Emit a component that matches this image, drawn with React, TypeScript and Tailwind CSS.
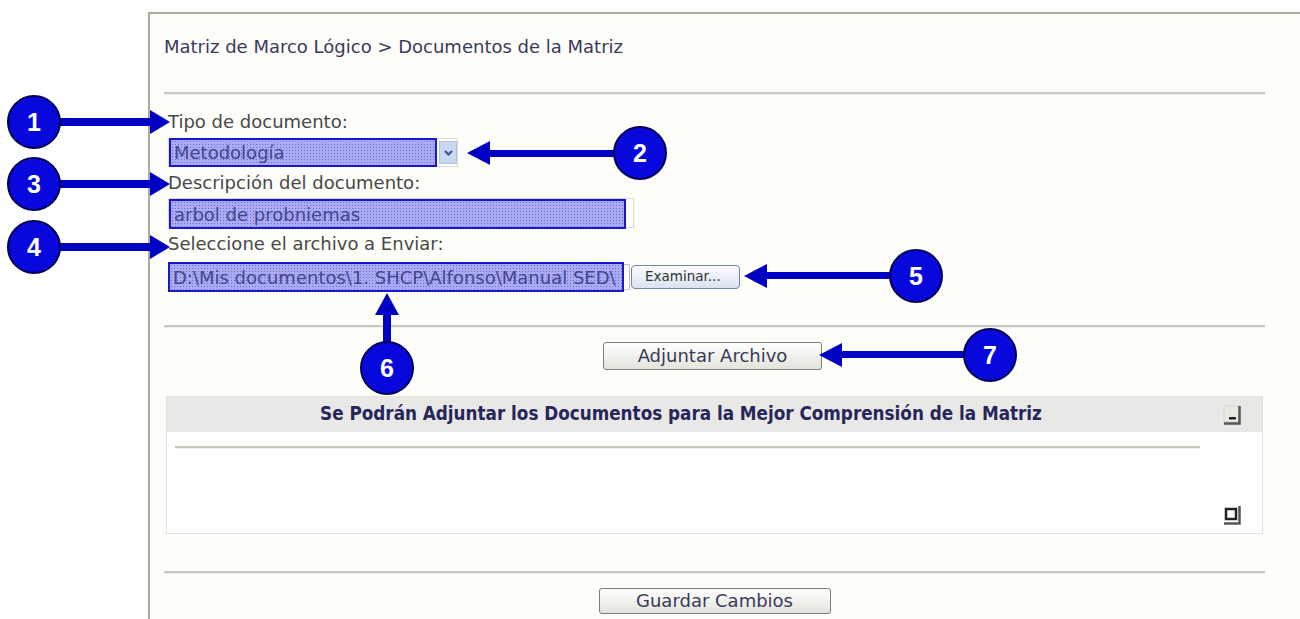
import React from "react";

type Callout = {
  n: string;
  cx: number;
  cy: number;
};

// círculos numerados de las anotaciones
const callouts: Callout[] = [
  { n: "1", cx: 34, cy: 122 },
  { n: "2", cx: 640, cy: 153 },
  { n: "3", cx: 34, cy: 184 },
  { n: "4", cx: 34, cy: 247 },
  { n: "5", cx: 916, cy: 276 },
  { n: "6", cx: 387, cy: 368 },
  { n: "7", cx: 990, cy: 355 },
];

function Arrows() {
  const c = "#0000c4";
  return (
    <svg
      className="absolute left-0 top-0 pointer-events-none"
      width={1300}
      height={619}
      viewBox="0 0 1300 619"
    >
      {/* 1, 3, 4 -> derecha */}
      {[122, 184, 247].map((y) => (
        <g key={y} fill={c}>
          <rect x={58} y={y - 4} width={94} height={8} />
          <polygon points={`150,${y - 12} 170,${y} 150,${y + 12}`} />
        </g>
      ))}
      {/* 2 <- izquierda */}
      <g fill={c}>
        <rect x={488} y={150} width={128} height={7} />
        <polygon points="490,141 467,153 490,165" />
      </g>
      {/* 5 */}
      <g fill={c}>
        <rect x={765} y={272} width={126} height={7} />
        <polygon points="767,264 744,276 767,288" />
      </g>
      {/* 7 */}
      <g fill={c}>
        <rect x={840} y={351} width={126} height={7} />
        <polygon points="842,343 819,355 842,367" />
      </g>
      {/* 6 arriba */}
      <g fill={c}>
        <rect x={383} y={313} width={8} height={32} />
        <polygon points="375,315 387,293 399,315" />
      </g>
    </svg>
  );
}

function Circles() {
  return (
    <>
      {callouts.map((c) => (
        <div
          key={c.n}
          className="absolute w-[54px] h-[54px] rounded-full bg-[#0808dc] border-2 border-[#000050] flex items-center justify-center text-white font-bold text-[25px] leading-none font-['Liberation_Sans',Arial,sans-serif]"
          style={{ left: c.cx - 27, top: c.cy - 27 }}
        >
          {c.n}
        </div>
      ))}
    </>
  );
}

function Hr({ className = "" }: { className?: string }) {
  return (
    <div
      className={
        "h-[3px] border-t-2 border-[#c9c9c0] border-b border-b-[#ececea] " +
        className
      }
    />
  );
}

function MinIcon() {
  return (
    <svg width="22" height="22" viewBox="0 0 22 22">
      <rect x="3" y="2" width="15" height="16" fill="#e9e9e2" stroke="#d6d6cf" />
      <path d="M18.5 2v17.5H3" fill="none" stroke="#555" strokeWidth="2.5" />
      <rect x="8" y="13" width="7" height="2.5" fill="#222" />
    </svg>
  );
}

function RestoreIcon() {
  return (
    <svg width="22" height="22" viewBox="0 0 22 22">
      <path d="M18.5 2v17.5H3" fill="none" stroke="#555" strokeWidth="2.5" />
      <rect x="5" y="5" width="10" height="10" fill="#fff" stroke="#222" strokeWidth="2.5" />
    </svg>
  );
}

function Button({
  children,
  className = "",
}: {
  children: React.ReactNode;
  className?: string;
}) {
  return (
    <button
      className={
        "border border-[#7d7d7d] rounded-[3px] bg-gradient-to-b from-[#ffffff] to-[#e4e4dc] text-[#3a3a5a] font-['DejaVu_Sans',Verdana,sans-serif] " +
        className
      }
    >
      {children}
    </button>
  );
}

export default function App() {
  const label =
    "h-[20px] leading-[20px] ml-[4px] text-[18px] text-[#484848] font-['DejaVu_Sans',Verdana,sans-serif]";
  const field =
    "border-2 border-[#1818c8] bg-[#ababf3] bg-[radial-gradient(#6c6ce2_0.8px,transparent_0.9px)] bg-[length:3px_3px] text-[#45458c] text-[18px] font-['DejaVu_Sans',Verdana,sans-serif] flex items-center px-[3px] overflow-hidden whitespace-nowrap";

  return (
    <div className="relative w-[1300px] h-[619px] bg-white overflow-hidden">
      <div className="ml-[148px] mt-[12px] h-[607px] border-l-2 border-t-2 border-[#a9ab9d] bg-[#fdfdf9] pl-[14px] pr-[35px] flex flex-col">
        <div className="h-[78px] pt-[23px] leading-[20px] text-[18px] text-[#3a3a5c] font-['DejaVu_Sans',Verdana,sans-serif]">
          Matriz de Marco Lógico &gt; Documentos de la Matriz
        </div>
        <Hr />

        <div className={label + " mt-[17px]"}>Tipo de documento:</div>
        <div className="ml-[4px] mt-[6px] flex items-center w-[290px] h-[29px] border border-[#dcdcd6]">
          <div className={field + " w-[268px] h-[29px]"}>Metodología</div>
          <div className="ml-[2px] w-[18px] h-[23px] bg-[#c9d8f2] border border-[#b3c4e0] flex items-center justify-center">
            <svg width="9" height="6" viewBox="0 0 9 6">
              <path d="M1 1l3.5 3.5L8 1" fill="none" stroke="#3b4f8a" strokeWidth="2" />
            </svg>
          </div>
        </div>

        <div className={label + " mt-[6px]"}>Descripción del documento:</div>
        <div className="ml-[4px] mt-[5px] flex w-[466px] h-[30px] border border-[#d8d8d2]">
          <div className={field + " w-[457px] h-[30px]"}>arbol de probniemas</div>
        </div>

        <div className={label + " mt-[6px]"}>Seleccione el archivo a Enviar:</div>
        <div className="ml-[4px] mt-[8px] flex items-center h-[30px]">
          <div className={field + " w-[456px] h-[30px]"}>
            D:\Mis documentos\1. SHCP\Alfonso\Manual SED\
          </div>
          <div className="w-[6px] h-[26px] border-y border-r border-[#c0c0c0]" />
          <button className="ml-[1px] w-[109px] h-[24px] rounded-[4px] border border-[#7287a6] bg-gradient-to-b from-[#fbfcfe] to-[#d9e3ef] text-[13.5px] leading-none text-[#333] font-['DejaVu_Sans',Verdana,sans-serif] text-left pl-[13px]">
            Examinar...
          </button>
        </div>

        <Hr className="mt-[33px]" />

        <div className="flex justify-center mt-[14px] pr-[4px]">
          <Button className="w-[219px] h-[28px] text-[18px] leading-none">Adjuntar Archivo</Button>
        </div>

        <div className="mt-[26px] ml-[2px] w-[1097px] h-[138px] border border-[#e3e3de] bg-white flex flex-col">
          <div className="h-[35px] bg-[#e8e8e6] flex items-center">
            <div className="flex-1 text-center pr-[19px] font-bold text-[18.7px] leading-none text-[#26265a] font-['DejaVu_Sans_Condensed','DejaVu_Sans',sans-serif] whitespace-nowrap">
              Se Podrán Adjuntar los Documentos para la Mejor Comprensión de la Matriz
            </div>
            <div className="w-[48px] flex justify-center pr-[12px]">
              <MinIcon />
            </div>
          </div>
          <div className="flex-1 flex">
            <div className="flex-1 pl-[8px] pr-[14px] pt-[14px]">
              <Hr />
            </div>
            <div className="w-[48px] flex items-end justify-center pb-[7px] pr-[12px]">
              <RestoreIcon />
            </div>
          </div>
        </div>

        <Hr className="mt-[37px]" />

        <div className="flex justify-center mt-[14px]">
          <Button className="w-[232px] h-[26px] text-[18px] leading-none">Guardar Cambios</Button>
        </div>
      </div>

      <Arrows />
      <Circles />
    </div>
  );
}
